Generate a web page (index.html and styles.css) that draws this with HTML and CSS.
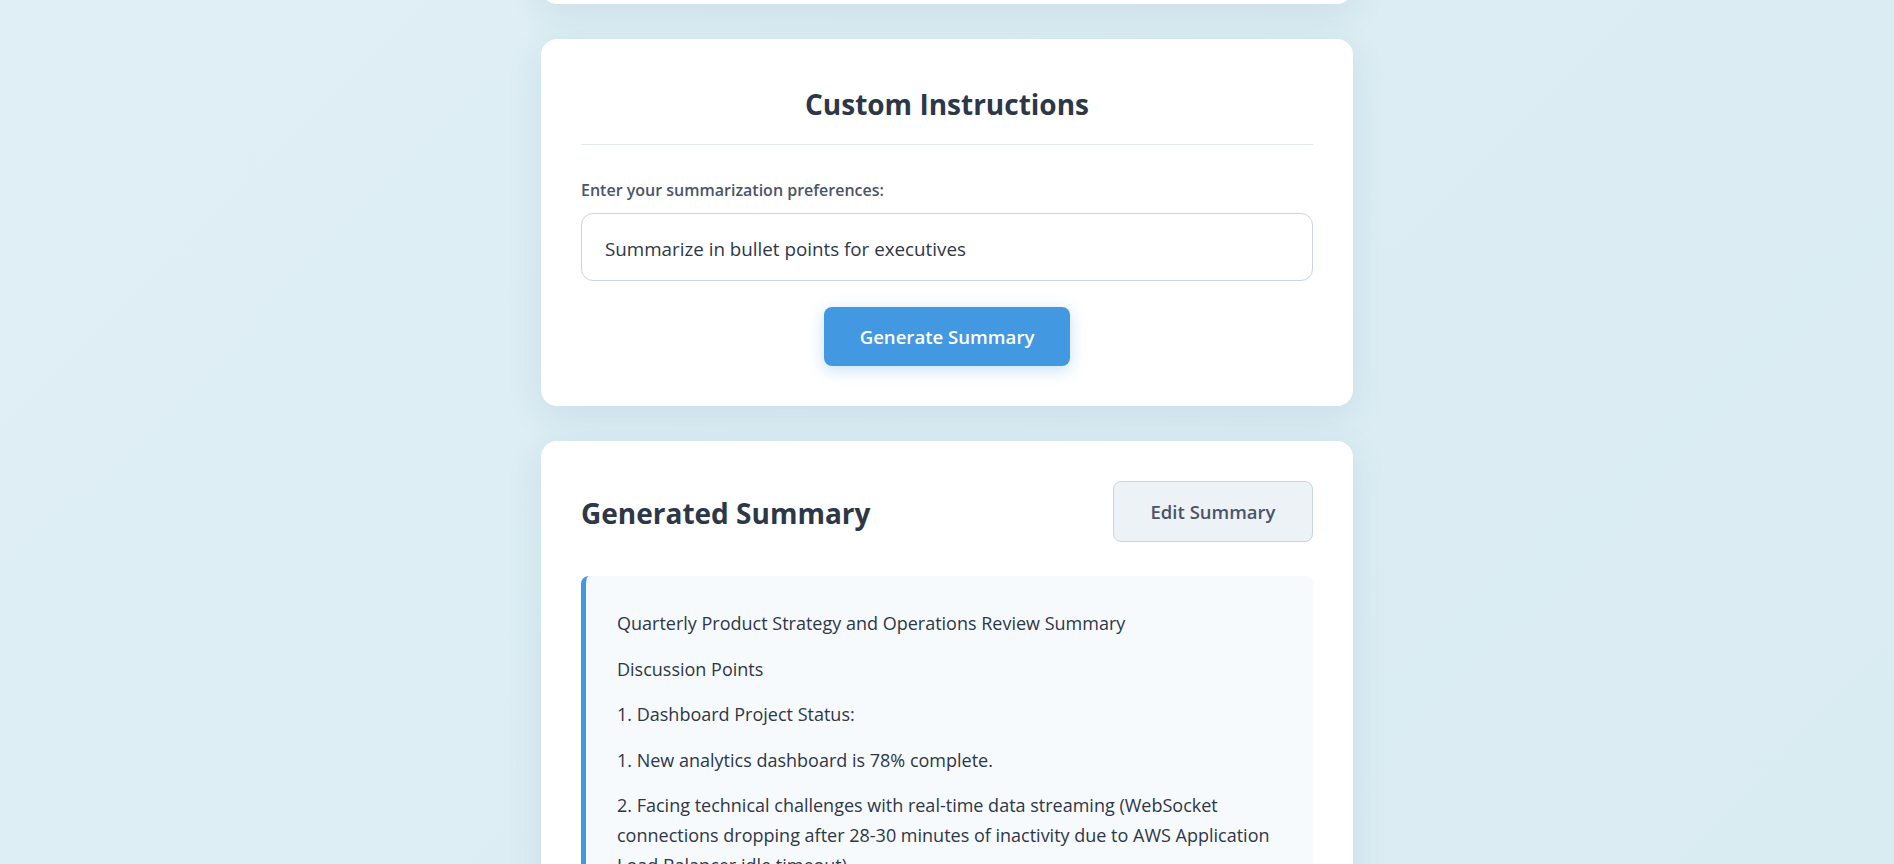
FILE: index.html
```html
<!DOCTYPE html>
<html lang="en">
<head>
<meta charset="utf-8">
<title>Meeting Summarizer</title>
<link rel="stylesheet" href="styles.css">
</head>
<body>
<main class="container">
  <section class="card card-previous" aria-hidden="true"></section>

  <section class="card">
    <h2 class="card-title">Custom Instructions</h2>
    <label class="field-label" for="prefs">Enter your summarization preferences:</label>
    <input class="text-input" id="prefs" type="text" value="Summarize in bullet points for executives">
    <div class="actions">
      <button class="btn-primary" type="button">Generate Summary</button>
    </div>
  </section>

  <section class="card">
    <div class="summary-header">
      <h2 class="summary-title">Generated Summary</h2>
      <button class="btn-secondary" type="button">Edit Summary</button>
    </div>
    <div class="summary-box">
      <p>Quarterly Product Strategy and Operations Review Summary</p>
      <p>Discussion Points</p>
      <p>1. Dashboard Project Status:</p>
      <p>1. New analytics dashboard is 78% complete.</p>
      <p>2. Facing technical challenges with real-time data streaming (WebSocket connections dropping after 28-30 minutes of inactivity due to AWS Application Load Balancer idle timeout).</p>
      <p>3. Proposed fix: implement heartbeat messages every 5 minutes to keep connections alive.</p>
    </div>
  </section>
</main>
</body>
</html>
```
FILE: styles.css
```css
html {
  background: linear-gradient(135deg, #dfeff5 0%, #d9ecf2 100%);
  min-height: 100%;
}

body {
  margin: 0;
  font-family: "Open Sans", "Noto Sans", sans-serif;
  color: #2d3748;
}

.container {
  width: 812px;
  margin: -196px auto 0;
  display: flex;
  flex-direction: column;
  gap: 35px;
  padding-bottom: 40px;
}

.card {
  background: #ffffff;
  border-radius: 16px;
  padding: 40px;
  box-shadow: 0 10px 36px rgba(40, 90, 120, 0.10);
}

.card-previous {
  height: 120px;
}

.card-title {
  margin: 7px 0 0;
  font-size: 28px;
  line-height: 36px;
  font-weight: 700;
  text-align: center;
  padding-bottom: 22px;
  border-bottom: 1px solid #e2e8f0;
}

.field-label {
  display: block;
  margin-top: 35px;
  font-size: 16px;
  line-height: 20px;
  font-weight: 600;
  color: #4a5568;
}

.text-input {
  display: block;
  box-sizing: border-box;
  width: 100%;
  height: 68px;
  margin-top: 13px;
  padding: 3px 23px 0;
  border: 1px solid #cbd5e0;
  border-radius: 12px;
  font-family: inherit;
  font-size: 18.8px;
  color: #2d3748;
  background: #fff;
  outline: none;
}

.actions {
  display: flex;
  justify-content: center;
  margin-top: 26px;
}

.btn-primary {
  height: 59px;
  padding: 0 36px;
  border: none;
  border-radius: 8px;
  background: #4299e1;
  color: #fff;
  font-family: inherit;
  font-size: 18.6px;
  font-weight: 600;
  box-shadow: 0 4px 16px rgba(66, 153, 225, 0.30);
  cursor: pointer;
}

.summary-header {
  display: flex;
  justify-content: space-between;
  align-items: center;
  margin-bottom: 34px;
}

.summary-title {
  margin: 3px 0 0;
  font-size: 28px;
  line-height: 36px;
  font-weight: 700;
}

.btn-secondary {
  height: 61px;
  width: 200px;
  border: 1px solid #cbd5e0;
  border-radius: 8px;
  background: #edf2f7;
  color: #4a5568;
  font-family: inherit;
  font-size: 18.5px;
  font-weight: 600;
  cursor: pointer;
}

.summary-box {
  background: #f7fafc;
  border-left: 5px solid #4299e1;
  border-radius: 8px;
  padding: 32px 30px 32px 31px;
}

.summary-box p {
  margin: 0 0 15.5px;
  font-size: 18px;
  line-height: 30px;
}
```
